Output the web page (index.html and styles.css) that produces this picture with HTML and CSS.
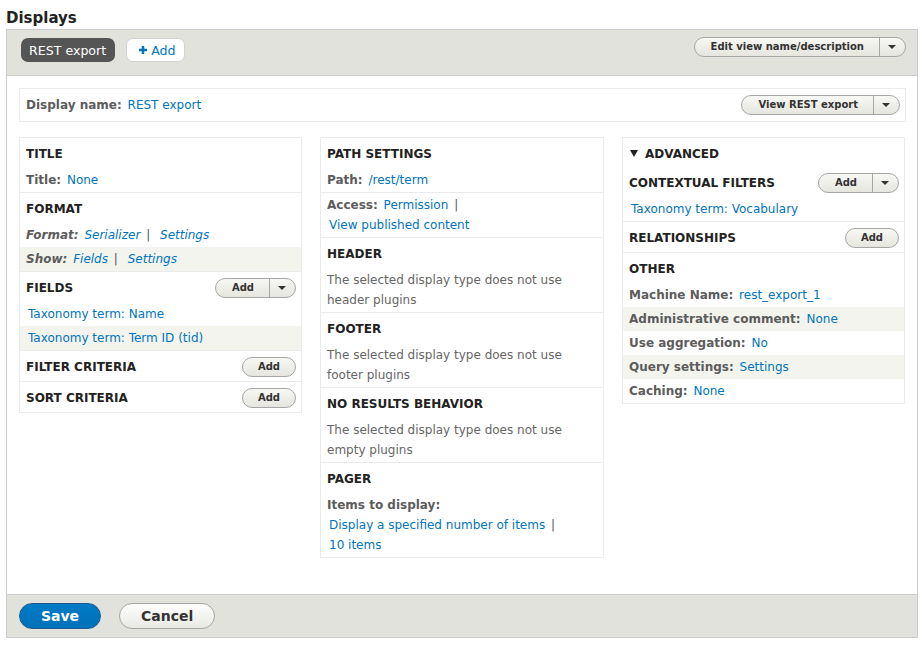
FILE: index.html
```html
<!DOCTYPE html>
<html>
<head>
<meta charset="utf-8">
<title>Displays</title>
<link rel="stylesheet" href="styles.css">
</head>
<body>
<h1 class="page-title">Displays</h1>
<div class="views-box">
  <div class="display-top">
    <div class="tabs">
      <span class="tab tab-active">REST export</span>
      <span class="tab tab-add"><svg class="plus" width="8" height="8" viewBox="0 0 8 8"><path d="M2.75 0h2.5v2.75H8v2.5H5.25V8h-2.5V5.25H0v-2.5h2.75z" fill="#0074bd"/></svg>Add</span>
    </div>
    <div class="dropbutton dropbutton-top">
      <span class="db-action">Edit view name/description</span><span class="db-toggle"><i class="caret"></i></span>
    </div>
  </div>
  <div class="display-body">
    <div class="display-name">
      <div><span class="label">Display name:</span> <a class="link">REST export</a></div>
      <div class="dropbutton">
        <span class="db-action">View REST export</span><span class="db-toggle"><i class="caret"></i></span>
      </div>
    </div>
    <div class="columns">
      <div class="col">
        <section class="bucket">
          <h3 class="bucket-title">Title</h3>
          <div class="setting"><span class="label">Title:</span> <a class="link">None</a></div>
        </section>
        <section class="bucket">
          <h3 class="bucket-title">Format</h3>
          <div class="setting italic"><span class="label">Format:</span> <a class="link">Serializer</a> <span class="sep">|</span> <a class="link">Settings</a></div>
          <div class="setting italic even"><span class="label">Show:</span> <a class="link">Fields</a> <span class="sep">|</span> <a class="link">Settings</a></div>
        </section>
        <section class="bucket">
          <div class="bucket-title"><span>Fields</span>
            <span class="dropbutton small"><span class="db-action">Add</span><span class="db-toggle"><i class="caret"></i></span></span>
          </div>
          <div class="setting"><a class="link">Taxonomy term: Name</a></div>
          <div class="setting even"><a class="link">Taxonomy term: Term ID (tid)</a></div>
        </section>
        <section class="bucket">
          <div class="bucket-title"><span>Filter criteria</span>
            <span class="button-small">Add</span>
          </div>
        </section>
        <section class="bucket">
          <div class="bucket-title"><span>Sort criteria</span>
            <span class="button-small">Add</span>
          </div>
        </section>
      </div>

      <div class="col">
        <section class="bucket">
          <h3 class="bucket-title">Path settings</h3>
          <div class="setting"><span class="label">Path:</span> <a class="link">/rest/term</a></div>
        </section>
        <section class="bucket bucket-plain">
          <div class="setting"><span class="label">Access:</span> <a class="link">Permission</a> <span class="sep">|</span> <a class="link">View published content</a></div>
        </section>
        <section class="bucket">
          <h3 class="bucket-title">Header</h3>
          <div class="setting desc">The selected display type does not use header plugins</div>
        </section>
        <section class="bucket">
          <h3 class="bucket-title">Footer</h3>
          <div class="setting desc">The selected display type does not use footer plugins</div>
        </section>
        <section class="bucket">
          <h3 class="bucket-title">No results behavior</h3>
          <div class="setting desc">The selected display type does not use empty plugins</div>
        </section>
        <section class="bucket">
          <h3 class="bucket-title">Pager</h3>
          <div class="setting"><span class="label">Items to display:</span> <a class="link">Display a specified number of items</a> <span class="sep">|</span> <a class="link">10 items</a></div>
        </section>
      </div>

      <div class="col">
        <div class="summary"><svg class="tri" width="8" height="7" viewBox="0 0 8 7"><path d="M0 0h8L4 7z" fill="#222"/></svg>Advanced</div>
        <section class="bucket bucket-first">
          <div class="bucket-title"><span>Contextual filters</span>
            <span class="dropbutton small"><span class="db-action">Add</span><span class="db-toggle"><i class="caret"></i></span></span>
          </div>
          <div class="setting"><a class="link">Taxonomy term: Vocabulary</a></div>
        </section>
        <section class="bucket">
          <div class="bucket-title"><span>Relationships</span>
            <span class="button-small">Add</span>
          </div>
        </section>
        <section class="bucket">
          <h3 class="bucket-title">Other</h3>
          <div class="setting"><span class="label">Machine Name:</span> <a class="link">rest_export_1</a></div>
          <div class="setting even"><span class="label">Administrative comment:</span> <a class="link">None</a></div>
          <div class="setting"><span class="label">Use aggregation:</span> <a class="link">No</a></div>
          <div class="setting even"><span class="label">Query settings:</span> <a class="link">Settings</a></div>
          <div class="setting"><span class="label">Caching:</span> <a class="link">None</a></div>
        </section>
      </div>
    </div>
  </div>
  <div class="actions">
    <span class="btn btn-primary">Save</span>
    <span class="btn">Cancel</span>
  </div>
</div>
</body>
</html>
```

FILE: styles.css
```css
* { box-sizing: border-box; }

body {
  margin: 0;
  padding: 0 4px 0 6px;
  font-family: "DejaVu Sans", "Liberation Sans", sans-serif;
  font-size: 12px;
  color: #333;
  background: #fff;
}

.page-title {
  margin: 0;
  height: 29px;
  padding-top: 8px;
  font-size: 15px;
  line-height: 20px;
  font-weight: bold;
  color: #222;
}

.views-box {
  border: 1px solid #ccc;
}

.display-top {
  height: 46px;
  background: #e1e2dc;
  border-bottom: 1px solid #ccc;
  padding: 8px 11px 0 14px;
  display: flex;
  justify-content: space-between;
  align-items: flex-start;
}

.tabs {
  display: flex;
  gap: 11px;
}

.tab {
  display: flex;
  align-items: center;
  height: 24px;
  padding: 0 9px 0 8px;
  border-radius: 7px;
  font-size: 12.6px;
}

.tab-active {
  background: #555;
  color: #fff;
}

.tab-add {
  background: #fff;
  border: 1px solid #d2d2d2;
  color: #0074bd;
  padding: 0 8px 0 12px;
  gap: 4px;
}

.plus { display: block; }

/* Drop buttons */
.dropbutton {
  display: inline-flex;
  height: 20px;
  border: 1px solid #a6a6a6;
  border-radius: 10px;
  background: linear-gradient(#f7f7f4, #e6e6df);
  font-size: 10px;
  font-weight: bold;
  color: #333;
  line-height: 18px;
  text-transform: none;
}

.dropbutton-top { margin-top: -1px; }

.db-action {
  padding: 0 15px 0 16px;
}

.db-toggle {
  width: 26px;
  border-left: 1px solid #a6a6a6;
  display: flex;
  align-items: center;
  justify-content: center;
}

.caret {
  display: block;
  width: 0;
  height: 0;
  border-left: 4px solid transparent;
  border-right: 4px solid transparent;
  border-top: 4px solid #333;
  margin-left: -1px;
}

.button-small {
  display: inline-block;
  height: 20px;
  line-height: 18px;
  padding: 0 15px;
  border: 1px solid #a6a6a6;
  border-radius: 10px;
  background: linear-gradient(#f7f7f4, #e6e6df);
  font-size: 10px;
  font-weight: bold;
  color: #333;
  text-transform: none;
}

/* Body */
.display-body {
  height: 518px;
  padding: 12px 11px 0 12px;
}

.display-name {
  height: 34px;
  border: 1px solid #ebebeb;
  display: flex;
  align-items: center;
  justify-content: space-between;
  padding: 0 5px 0 6px;
  margin-bottom: 15px;
}

.label {
  font-weight: bold;
  color: #5c5c5c;
}

.link {
  color: #0074bd;
  text-decoration: none;
  display: inline-block;
  margin-left: 2px;
}

.sep {
  margin-left: 2px;
  margin-right: 4px;
  color: #555;
}

.columns {
  display: grid;
  grid-template-columns: 283px 284px 283px;
  gap: 18px;
  align-items: start;
}

.col {
  border: 1px solid #ebebeb;
}

.bucket + .bucket {
  border-top: 1px solid #ebebeb;
}

.bucket-title {
  margin: 0;
  height: 30px;
  padding: 2px 5px 0 6px;
  display: flex;
  align-items: center;
  justify-content: space-between;
  font-size: 12px;
  font-weight: bold;
  text-transform: uppercase;
  color: #222;
  line-height: 18px;
}

.setting {
  padding: 2px 6px;
  line-height: 20px;
}

.setting.even {
  background: #f3f4ee;
}

.italic { font-style: italic; }

.desc { color: #666; }

.summary {
  height: 29px;
  padding: 2px 6px 0 7px;
  display: flex;
  align-items: center;
  gap: 7px;
  font-weight: bold;
  text-transform: uppercase;
  color: #222;
}

.tri { display: block; }

/* Actions */
.actions {
  height: 43px;
  border-top: 1px solid #ccc;
  background: #e1e2dc;
  padding: 8px 12px;
  display: flex;
  gap: 18px;
}

.btn {
  display: inline-block;
  height: 26px;
  line-height: 24px;
  padding: 0 21px;
  border: 1px solid #a6a6a6;
  border-radius: 13px;
  background: linear-gradient(#fefefe, #e8e8e3);
  font-size: 14px;
  font-weight: bold;
  color: #333;
}

.btn-primary {
  width: 82px;
  text-align: center;
  padding: 0;
  background: linear-gradient(#007bc6, #0071b8);
  border-color: #1e5c90;
  color: #fff;
}
```
